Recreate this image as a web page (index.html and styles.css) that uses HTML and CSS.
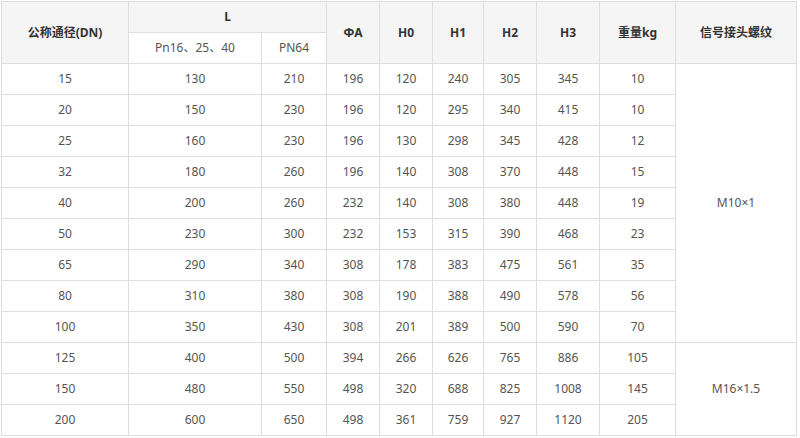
FILE: index.html
```html
<!DOCTYPE html>
<html lang="zh">
<head>
<meta charset="utf-8">
<title>参数表</title>
<link rel="stylesheet" href="styles.css">
</head>
<body>
<table class="spec">
  <colgroup>
    <col class="c1"><col class="c2"><col class="c3"><col class="c4"><col class="c5">
    <col class="c6"><col class="c7"><col class="c8"><col class="c9"><col class="c10">
  </colgroup>
  <thead>
    <tr>
      <th rowspan="2">公称通径(DN)</th>
      <th colspan="2">L</th>
      <th rowspan="2">ΦA</th>
      <th rowspan="2">H0</th>
      <th rowspan="2">H1</th>
      <th rowspan="2">H2</th>
      <th rowspan="2">H3</th>
      <th rowspan="2">重量kg</th>
      <th rowspan="2">信号接头螺纹</th>
    </tr>
    <tr>
      <td class="sub">Pn16、25、40</td>
      <td class="sub">PN64</td>
    </tr>
  </thead>
  <tbody>
    <tr><td>15</td><td>130</td><td>210</td><td>196</td><td>120</td><td>240</td><td>305</td><td>345</td><td>10</td><td rowspan="9">M10×1</td></tr>
    <tr><td>20</td><td>150</td><td>230</td><td>196</td><td>120</td><td>295</td><td>340</td><td>415</td><td>10</td></tr>
    <tr><td>25</td><td>160</td><td>230</td><td>196</td><td>130</td><td>298</td><td>345</td><td>428</td><td>12</td></tr>
    <tr><td>32</td><td>180</td><td>260</td><td>196</td><td>140</td><td>308</td><td>370</td><td>448</td><td>15</td></tr>
    <tr><td>40</td><td>200</td><td>260</td><td>232</td><td>140</td><td>308</td><td>380</td><td>448</td><td>19</td></tr>
    <tr><td>50</td><td>230</td><td>300</td><td>232</td><td>153</td><td>315</td><td>390</td><td>468</td><td>23</td></tr>
    <tr><td>65</td><td>290</td><td>340</td><td>308</td><td>178</td><td>383</td><td>475</td><td>561</td><td>35</td></tr>
    <tr><td>80</td><td>310</td><td>380</td><td>308</td><td>190</td><td>388</td><td>490</td><td>578</td><td>56</td></tr>
    <tr><td>100</td><td>350</td><td>430</td><td>308</td><td>201</td><td>389</td><td>500</td><td>590</td><td>70</td></tr>
    <tr><td>125</td><td>400</td><td>500</td><td>394</td><td>266</td><td>626</td><td>765</td><td>886</td><td>105</td><td rowspan="3">M16×1.5</td></tr>
    <tr><td>150</td><td>480</td><td>550</td><td>498</td><td>320</td><td>688</td><td>825</td><td>1008</td><td>145</td></tr>
    <tr><td>200</td><td>600</td><td>650</td><td>498</td><td>361</td><td>759</td><td>927</td><td>1120</td><td>205</td></tr>
  </tbody>
</table>
</body>
</html>
```

FILE: styles.css
```css
html, body {
  margin: 0;
  padding: 0;
  background: #ffffff;
}

body {
  padding: 1px 0 0 1px;
  font-family: "Noto Sans", "Noto Sans CJK SC", sans-serif;
  font-size: 12px;
  color: #555555;
}

.spec {
  border-collapse: collapse;
  table-layout: fixed;
  width: 795px;
}

.c1 { width: 127px; }
.c2 { width: 133px; }
.c3 { width: 65px; }
.c4 { width: 53px; }
.c5 { width: 53px; }
.c6 { width: 51px; }
.c7 { width: 53px; }
.c8 { width: 63px; }
.c9 { width: 76px; }
.c10 { width: 121px; }

.spec th,
.spec td {
  border: 1px solid #dedede;
  height: 30px;
  padding: 0;
  text-align: center;
  vertical-align: middle;
  line-height: 16px;
}

.spec th {
  background: #f5f5f5;
  font-weight: bold;
  color: #333333;
}

.spec td.sub {
  background: #ffffff;
  color: #555555;
}
```
